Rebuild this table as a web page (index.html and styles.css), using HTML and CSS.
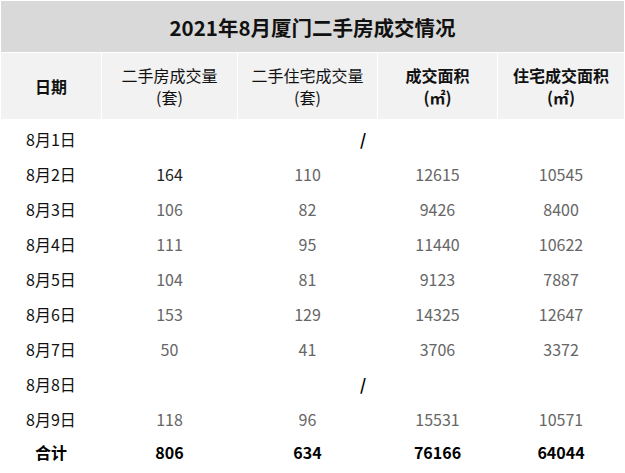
FILE: index.html
```html
<!DOCTYPE html>
<html lang="zh-CN">
<head>
<meta charset="utf-8">
<title>2021年8月厦门二手房成交情况</title>
<link rel="stylesheet" href="styles.css">
</head>
<body>
<table class="report">
  <colgroup>
    <col class="c1"><col class="c2"><col class="c3"><col class="c4"><col class="c5">
  </colgroup>
  <thead>
    <tr><th class="title" colspan="5">2021年8月厦门二手房成交情况</th></tr>
    <tr class="head">
      <th class="strong">日期</th>
      <th>二手房成交量<br>(套)</th>
      <th>二手住宅成交量<br>(套)</th>
      <th class="strong">成交面积<br>(㎡)</th>
      <th class="strong">住宅成交面积<br>(㎡)</th>
    </tr>
  </thead>
  <tbody>
    <tr><td class="date">8月1日</td><td class="none" colspan="4">/</td></tr>
    <tr><td class="date">8月2日</td><td class="dark">164</td><td>110</td><td>12615</td><td>10545</td></tr>
    <tr><td class="date">8月3日</td><td>106</td><td>82</td><td>9426</td><td>8400</td></tr>
    <tr><td class="date">8月4日</td><td>111</td><td>95</td><td>11440</td><td>10622</td></tr>
    <tr><td class="date">8月5日</td><td>104</td><td>81</td><td>9123</td><td>7887</td></tr>
    <tr><td class="date">8月6日</td><td>153</td><td>129</td><td>14325</td><td>12647</td></tr>
    <tr><td class="date">8月7日</td><td>50</td><td>41</td><td>3706</td><td>3372</td></tr>
    <tr><td class="date">8月8日</td><td class="none" colspan="4">/</td></tr>
    <tr><td class="date">8月9日</td><td>118</td><td>96</td><td>15531</td><td>10571</td></tr>
    <tr class="total"><td>合计</td><td>806</td><td>634</td><td>76166</td><td>64044</td></tr>
  </tbody>
</table>
</body>
</html>
```
FILE: styles.css
```css
html, body {
  margin: 0;
  padding: 0;
  background: #ffffff;
}
body {
  font-family: "Noto Sans CJK SC", "Microsoft YaHei", sans-serif;
  color: #000;
}
.report {
  width: 625px;
  table-layout: fixed;
  border-collapse: separate;
  border-spacing: 1px;
  background: #ffffff;
}
.c1 { width: 100px; }
.c2 { width: 135px; }
.c3 { width: 139px; }
.c4 { width: 119px; }
.c5 { width: 126px; }
.report th, .report td {
  padding: 0;
  text-align: center;
  vertical-align: middle;
}
.title {
  height: 51px;
  background: #d9d9d9;
  font-size: 20.5px;
  font-weight: 700;
  line-height: 24px;
  color: #111;
}
.head th {
  height: 66px;
  background: #f2f2f2;
  font-size: 16px;
  font-weight: 400;
  line-height: 22px;
  color: #111;
}
.head th.strong {
  font-weight: 700;
}
.report tbody td {
  height: 34px;
  font-size: 16px;
  line-height: 20px;
  color: #666;
  padding-top: 4px;
  box-sizing: border-box;
}
.report tbody td.date {
  color: #111;
}
.report tbody td.dark {
  color: #222;
}
.report tbody td.none {
  color: #000;
  font-weight: 700;
}
.report tbody .total td {
  color: #000;
  font-weight: 700;
  padding-top: 0;
}
```
